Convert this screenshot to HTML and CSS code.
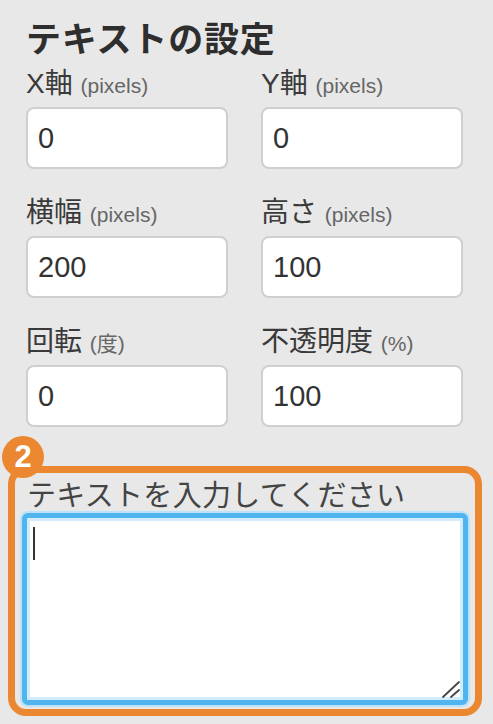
FILE: index.html
```html
<!DOCTYPE html>
<html lang="ja">
<head>
<meta charset="utf-8">
<link rel="stylesheet" href="styles.css">
</head>
<body>
<div class="panel">
  <h1 class="title">テキストの設定</h1>
  <div class="grid">
    <div class="field">
      <label class="label">X軸 <span class="unit">(pixels)</span></label>
      <input class="input" type="text" value="0">
    </div>
    <div class="field">
      <label class="label">Y軸 <span class="unit">(pixels)</span></label>
      <input class="input" type="text" value="0">
    </div>
    <div class="field">
      <label class="label">横幅 <span class="unit">(pixels)</span></label>
      <input class="input" type="text" value="200">
    </div>
    <div class="field">
      <label class="label">高さ <span class="unit">(pixels)</span></label>
      <input class="input" type="text" value="100">
    </div>
    <div class="field">
      <label class="label">回転 <span class="unit">(度)</span></label>
      <input class="input" type="text" value="0">
    </div>
    <div class="field">
      <label class="label">不透明度 <span class="unit">(%)</span></label>
      <input class="input" type="text" value="100">
    </div>
  </div>
</div>
<div class="highlight">
  <span class="badge">2</span>
  <div class="text-label">テキストを入力してください</div>
  <div class="area-wrap">
    <textarea class="area"></textarea>
    <span class="caret"></span>
    <svg class="grip" width="20" height="20" viewBox="0 0 20 20">
      <line x1="2" y1="18" x2="18" y2="3" stroke="#444" stroke-width="1.8" stroke-linecap="round"/>
      <line x1="10" y1="18" x2="18" y2="11" stroke="#444" stroke-width="1.8" stroke-linecap="round"/>
    </svg>
  </div>
</div>
</body>
</html>
```
FILE: styles.css
```css
html, body {
  margin: 0;
  padding: 0;
  background: #e8e8e8;
}
body {
  width: 493px;
  height: 724px;
  overflow: hidden;
  font-family: "Liberation Sans", "Noto Sans CJK JP", sans-serif;
  color: #333;
}
.panel {
  padding: 17px 0 0 26px;
}
.title {
  margin: 0 0 10px 0;
  font-family: "Noto Sans CJK JP", sans-serif;
  font-weight: 700;
  font-size: 35px;
  line-height: 40px;
  color: #2e2e2e;
  letter-spacing: 0.8px;
}
.grid {
  display: grid;
  grid-template-columns: 202px 202px;
  column-gap: 33px;
  row-gap: 27px;
}
.field {
  display: flex;
  flex-direction: column;
  gap: 6px;
}
.label {
  font-size: 28px;
  line-height: 34px;
  height: 34px;
  color: #3a3a3a;
  white-space: nowrap;
}
.unit {
  font-size: 21px;
  color: #666;
}
.input {
  box-sizing: border-box;
  width: 202px;
  height: 62px;
  margin: 0;
  padding: 0 0 0 10px;
  border: 2px solid #cfcfcf;
  border-radius: 8px;
  background: #fff;
  font-family: "Liberation Sans", sans-serif;
  font-size: 29px;
  color: #333;
  outline: none;
}
.highlight {
  position: relative;
  box-sizing: border-box;
  margin: 39px 0 0 8px;
  width: 474px;
  height: 250px;
  border: 7px solid #ec8731;
  border-radius: 18px;
  padding: 3px 5px 0 7px;
}
.badge {
  position: absolute;
  left: -13px;
  top: -37px;
  width: 42px;
  height: 42px;
  border-radius: 50%;
  background: #ec8731;
  color: #fff;
  font-family: "Liberation Sans", sans-serif;
  font-weight: 700;
  font-size: 31px;
  line-height: 42px;
  text-align: center;
}
.text-label {
  padding-left: 5px;
  font-family: "Noto Sans CJK JP", sans-serif;
  font-size: 29px;
  line-height: 34px;
  color: #444;
  letter-spacing: 0.3px;
  white-space: nowrap;
}
.area-wrap {
  position: relative;
  margin-top: 3px;
  width: 446px;
  height: 192px;
}
.area {
  box-sizing: border-box;
  display: block;
  width: 446px;
  height: 192px;
  margin: 0;
  border: 5px solid #50b4ef;
  border-radius: 6px;
  box-shadow: 0 0 0 2px #bde2f8, inset 0 0 0 3px #d2ecfb;
  background: #fff;
  outline: none;
  resize: none;
}
.caret {
  position: absolute;
  left: 11px;
  top: 14px;
  width: 2px;
  height: 33px;
  background: #333;
}
.grip {
  position: absolute;
  right: 7px;
  bottom: 6px;
}
```
